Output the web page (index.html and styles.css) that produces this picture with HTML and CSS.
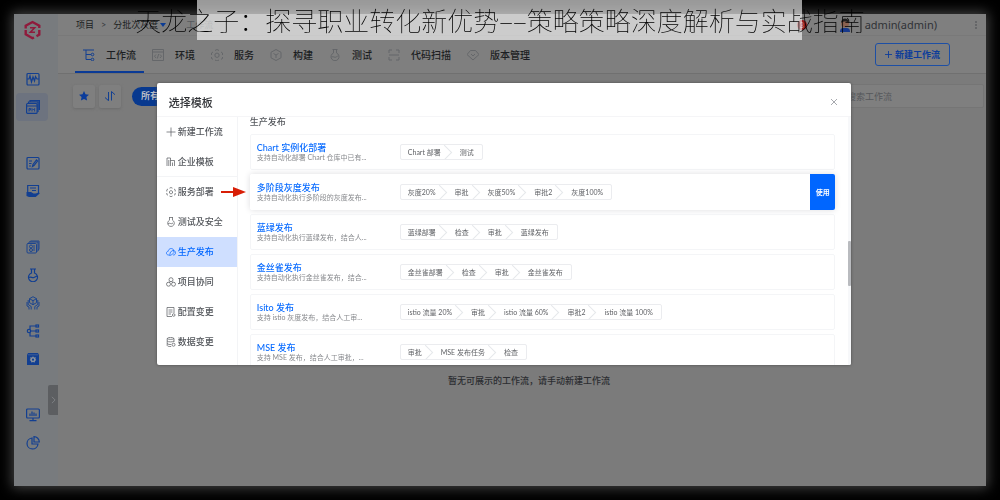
FILE: index.html
```html
<!DOCTYPE html>
<html lang="zh-CN">
<head>
<meta charset="utf-8">
<title>选择模板</title>
<link rel="stylesheet" href="styles.css">
</head>
<body>
<div class="stage">
<div class="app">
  <aside class="sidebar">
    <svg class="logo" viewBox="0 0 18 20"><path d="M2.200 8.500V5.700L9 2l6.800 3.700V8M15.800 10v4.500L13 16.200M10.500 17.500L9 18.200l-6.800-3.900V10" fill="none" stroke="#8f1a3c" stroke-width="2.400"/><path d="M6.500 7.800h4.700L6.800 12.300h4.700" fill="none" stroke="#8f1a3c" stroke-width="1.500"/></svg>
    <nav class="side-group">
      <a class="side-link" href="#"><svg class="icon" viewBox="0 0 14 14"><rect x="1" y="1.500" width="12" height="11.500" rx="1"/><path d="M1 7h2l1-3 1.500 6L7 5l1.500 4 1-4.500L11 7h2"/></svg></a>
      <a class="side-link side-link-active" href="#"><svg class="icon" viewBox="0 0 14 14"><rect x=".6" y="3.500" width="10.500" height="9.900" rx="1"/><path d="M1 6h10M2.500 3.500V2H12v10M4 2V.6h9.400V10"/><path stroke-width=".9" d="M3 11.500v-3h1.600V10H3M6 11.500v-3l1.300 1.300 1.300-1.300v3"/></svg></a>
    </nav>
    <nav class="side-group">
      <a class="side-link" href="#"><svg class="icon" viewBox="0 0 14 14"><rect x="1" y="1.500" width="12" height="11.500" rx="1"/><path d="M3 5h3M3 7.500h2.500M3 10h2M6.500 10.500l.5-2 3.500-4.500 1 1L8 9.500z"/></svg></a>
      <a class="side-link" href="#"><svg class="icon" viewBox="0 0 14 14"><path d="M1.700 9V1.500h10.800V9.500M4 4h6M6 6.500h4"/><path class="fill" d="M.5 8h4.500l2.500 1.500h2L13 8.500l.7 1-4 3.500H3L.5 12z"/></svg></a>
    </nav>
    <nav class="side-group">
      <a class="side-link" href="#"><svg class="icon icon-fine" viewBox="0 0 14 14"><rect x="1" y="3.500" width="9.500" height="9.500" rx="1"/><path d="M2 3.500L3.500 2H12v8.500L10.500 12M3.500 2L4.500 1H13v8l-1 1.500"/><circle cx="5" cy="6.500" r="1.500"/><circle cx="5" cy="10" r="1.500"/><path d="M8 5v6"/></svg></a>
      <a class="side-link" href="#"><svg class="icon" viewBox="0 0 14 14"><path d="M4 1h6M5.500 1v4a4.500 4.500 0 1 0 3 0V1M3 9.500c2-1.500 3 1 5 0l3-1.500"/></svg></a>
      <a class="side-link" href="#"><svg class="icon icon-fine" viewBox="0 0 14 14"><path d="M7 .7l3.500 2v4L7 8.700 3.500 6.700v-4zM3.500 2.700L7 4.700l3.500-2M7 4.700v4M2.200 4v4.500l3 2V13.500M1 6v4l2 1v2.500M11.800 4v4.500l-3 2V13.500M13 6v4l-2 1v2.500"/></svg></a>
      <a class="side-link" href="#"><svg class="icon" viewBox="0 0 14 14"><circle cx="3" cy="7" r="1.700"/><path d="M4.500 7H10M10 2H4v3.500M4 8.500V12h6"/><rect x="10" y="1" width="2.500" height="2"/><rect x="10" y="6" width="2.500" height="2"/><rect x="10" y="11" width="2.500" height="2"/></svg></a>
      <a class="side-link" href="#"><svg class="icon" viewBox="0 0 14 14"><path class="fill" d="M2 1h10l1 2v10H1V3z"/><path class="knock" d="M2 2.800h10"/><path class="gear" d="M7 4.300l1 1.200 1.800-.2-.4 1.600.9 1.100-1.300.9-.3 1.500L7 9.900l-1.700.5-.3-1.500L3.700 8l.9-1.100-.4-1.600 1.800.2z"/><circle class="fill" cx="7" cy="7.700" r="1.100"/></svg></a>
    </nav>
    <nav class="side-group">
      <a class="side-link" href="#"><svg class="icon" viewBox="0 0 14 14"><rect x=".6" y="1" width="12.800" height="9" rx="1"/><path d="M4 8V5.500M6 8V3.500M8 8V4.500M10 8V5.500M7 10v2.500M3.500 12.700h7"/></svg></a>
      <a class="side-link" href="#"><svg class="icon" viewBox="0 0 14 14"><path d="M6 2a5.500 5.500 0 1 0 6 6H6zM8 .700V6h5.300A5.300 5.300 0 0 0 8 .700z"/></svg></a>
    </nav>
    <button class="collapse" aria-label="展开"><svg viewBox="0 0 6 10"><path d="M1 1l4 4-4 4"/></svg></button>
  </aside>
  <main class="main">
    <header class="topbar">
      <a class="crumb" href="#">项目</a><span class="crumb-sep">&gt;</span><a class="crumb" href="#">分批次灰度</a><span class="caret"></span><span class="crumb crumb-faded">工作流</span>
      <div class="user">
        <span class="badge">3</span>
        <svg class="avatar" viewBox="0 0 12 14"><path d="M1 14c0-4 2-4 5-4s5 0 5 4z" fill="#17398c"/><circle cx="6" cy="5.500" r="4" fill="#8b6250"/><path d="M2 5c0-6 8-6 8 0-2-2-6-2-8 0z" fill="#222"/></svg>
        <span class="user-name">admin(admin)</span>
        <button class="more" aria-label="更多"><svg viewBox="0 0 2 8"><circle cx="1" cy="1" r=".8"/><circle cx="1" cy="4" r=".8"/><circle cx="1" cy="7" r=".8"/></svg></button>
      </div>
    </header>
    <div class="tabs">
      <a class="tab tab-active" href="#"><svg viewBox="0 0 12 12"><path d="M0 1h11M3 1v9.500h5M3 5.500h5"/><circle cx="9.500" cy="5.500" r="1.300"/><circle cx="9.500" cy="10.500" r="1.300"/></svg>工作流</a>
      <a class="tab" href="#"><svg viewBox="0 0 12 12"><path d="M.5 .5h11v11H.5zM.5 3h11M4 5.500L2.500 7.200 4 9M8 5.500l1.500 1.700L8 9M6.700 5L5.300 9.500"/></svg>环境</a>
      <a class="tab" href="#"><svg viewBox="0 0 12 12"><path d="M4 1.500L6 .5l2 1M10 3l1.500 1v2M11.500 8v1.500L10 10.300M8 11l-2 1-2-1M2 10.300L.5 9.500V8M.5 6V4L2 3M6 4l2 1v2.500l-2 1-2-1V5z"/></svg>服务</a>
      <a class="tab" href="#"><svg viewBox="0 0 12 12"><path d="M6 .5l5 2.800v5.500l-5 2.700-5-2.700V3.300zM3.500 4.500L6 6l2.500-1.500M6 6v3"/></svg>构建</a>
      <a class="tab" href="#"><svg viewBox="0 0 12 12"><path d="M3.500 .5h5M4.500 .5v3.500a4 4 0 1 0 3 0V.5M2.500 8c2-1 3 1 5 0L9 6.500"/></svg>测试</a>
      <a class="tab" href="#"><svg viewBox="0 0 12 12"><path d="M4 1H1v3M8 1h3v3M1 8v3h3M11 8v3H8M1 6h10"/></svg>代码扫描</a>
      <a class="tab" href="#"><svg viewBox="0 0 12 12"><path d="M3.500 1.500h5L12 5.500 6 11 0 5.500zM4 5l2 2 2-2"/></svg>版本管理</a>
      <button class="create"><svg viewBox="0 0 8 8"><path d="M4 0v8M0 4h8"/></svg>新建工作流</button>
    </div>
    <div class="toolbar">
      <button class="tool" aria-label="收藏"><svg viewBox="0 0 10 10"><path class="star" d="M5 0l1.500 3.300 3.500.4-2.600 2.400.7 3.500L5 7.900 1.900 9.600l.7-3.500L0 3.700l3.500-.4z"/></svg></button>
      <button class="tool" aria-label="排序"><svg viewBox="0 0 10 10"><path d="M0 6.500l3.500 3.200V1M6.500 9.500V.5L10 3.700"/></svg></button>
      <button class="pill">所有</button>
      <input class="search" type="text" placeholder="搜索工作流" aria-label="搜索工作流">
    </div>
    <p class="empty">暂无可展示的工作流，请手动新建工作流</p>
  </main>
</div>
</div>

<div class="overlay">
<section class="modal" role="dialog" aria-labelledby="modal-title">
  <header class="modal-head"><h2 class="modal-title" id="modal-title">选择模板</h2><button class="close" aria-label="关闭"><svg viewBox="0 0 6 6"><path d="M0 0l6 6M6 0L0 6"/></svg></button></header>
  <div class="modal-body">
    <nav class="menu">
      <a class="menu-item" href="#"><svg viewBox="0 0 10 10"><path d="M5 .5v9M.5 5h9"/></svg>新建工作流</a>
      <a class="menu-item menu-item-last" href="#"><svg viewBox="0 0 10 10"><path d="M1 9V1h3.500v8M4.500 3.500h4V9M2.800 3v6M6.500 5.500V9"/></svg>企业模板</a>
      <a class="menu-item" href="#"><svg viewBox="0 0 10 10"><path d="M3.500 1.200L5 .5l1.500.7M8 2l1.200.8v1.700M9.200 6v1.500L8 8.200M6.500 9L5 9.700 3.500 9M2 8.200L.8 7.500V6M.8 4.500V2.800L2 2M5 3.500L6.500 4.400v1.700L5 7l-1.500-.9V4.400z"/></svg>服务部署</a>
      <a class="menu-item" href="#"><svg viewBox="0 0 10 10"><path d="M3 .5h4M3.500 .5v2.700a3.300 3.300 0 1 0 3 0V.5M2 6.800c2-1.500 3 1 5-.8"/></svg>测试及安全</a>
      <a class="menu-item menu-item-active" href="#"><svg viewBox="0 0 10 10"><path d="M3 8H2.200C-.3 7.500 0 4.500 2.200 4.300 2.500 1 7 .5 7.700 3.500 10.300 4 10 8 7.500 8H7M3.500 8.500L4.500 5l3-2 .5 2.500L5.500 8z"/></svg>生产发布</a>
      <a class="menu-item" href="#"><svg viewBox="0 0 10 10"><circle cx="5" cy="2.700" r="2"/><circle cx="2.500" cy="7.200" r="2"/><circle cx="7.500" cy="7.200" r="2"/><path d="M4 4.500L3 5.500M6 4.500l1 1"/></svg>项目协同</a>
      <a class="menu-item" href="#"><svg viewBox="0 0 10 10"><path d="M8 6V.5H1v9h5M2.500 3h4M2.500 5h4M2.500 7h2.500"/><circle cx="7.700" cy="8" r="1.300"/></svg>配置变更</a>
      <a class="menu-item" href="#"><svg viewBox="0 0 10 10"><path d="M8 5V1.500C7 0 2 0 1.200 1.500v7c.5 1 2 1 4 1M1.200 1.500c.8 1.200 6 1.200 6.800 0M1.200 4c.8 1.200 6 1.200 6.800 0M1.200 6.500c.8 1 2.500 1 4 1"/><circle cx="7.500" cy="7.700" r="1.500"/></svg>数据变更</a>
    </nav>
    <div class="templates">
      <h3 class="group-title">生产发布</h3>
      <article class="card"><div class="info"><h4 class="name">Chart 实例化部署</h4><p class="desc">支持自动化部署 Chart 仓库中已有...</p></div><ol class="steps"><li>Chart 部署</li><li>测试</li></ol></article>
      <article class="card card-hover"><div class="info"><h4 class="name">多阶段灰度发布</h4><p class="desc">支持自动化执行多阶段的灰度发布...</p></div><ol class="steps"><li>灰度20%</li><li>审批</li><li>灰度50%</li><li>审批2</li><li>灰度100%</li></ol><button class="use">使用</button>
        <svg class="pointer" viewBox="0 0 25 12"><path d="M0 6h14" stroke="#d81e06" stroke-width="2"/><path d="M12 1l13 5-13 5z" fill="#d81e06" stroke="none"/></svg></article>
      <article class="card"><div class="info"><h4 class="name">蓝绿发布</h4><p class="desc">支持自动化执行蓝绿发布，结合人...</p></div><ol class="steps"><li>蓝绿部署</li><li>检查</li><li>审批</li><li>蓝绿发布</li></ol></article>
      <article class="card"><div class="info"><h4 class="name">金丝雀发布</h4><p class="desc">支持自动化执行金丝雀发布，结合...</p></div><ol class="steps"><li>金丝雀部署</li><li>检查</li><li>审批</li><li>金丝雀发布</li></ol></article>
      <article class="card"><div class="info"><h4 class="name">Isito 发布</h4><p class="desc">支持 istio 灰度发布，结合人工审...</p></div><ol class="steps"><li>istio 流量 20%</li><li>审批</li><li>istio 流量 60%</li><li>审批2</li><li>istio 流量 100%</li></ol></article>
      <article class="card"><div class="info"><h4 class="name">MSE 发布</h4><p class="desc">支持 MSE 发布，结合人工审批，...</p></div><ol class="steps"><li>审批</li><li>MSE 发布任务</li><li>检查</li></ol></article>
    </div>
    <div class="scrollbar"><div class="thumb"></div></div>
  </div>
</section>
</div>

<div class="banner"><div class="banner-plate"></div><h1 class="banner-title">天龙之子：探寻职业转化新优势––策略策略深度解析与实战指南</h1></div>
</body>
</html>
```

FILE: styles.css
```css
* { box-sizing: border-box; }
body { margin: 0; background: #000; font-family: Lato, "Noto Sans CJK SC", sans-serif; font-size: 9px; line-height: 12px; color: #1c1e22; overflow: hidden; }
h1, h2, h3, h4, p, ol { margin: 0; padding: 0; font-weight: 400; }
a { color: inherit; text-decoration: none; }
button, input { font: inherit; color: inherit; border: 0; padding: 0; margin: 0; background: none; }
svg { fill: none; stroke: currentColor; flex: none; display: block; }

.stage { height: 100vh; padding: 14px; }
.app { display: flex; height: 100%; background: #7b7b7b; box-shadow: 0 0 12px 2px #444; }

.sidebar { position: relative; flex: none; width: 44px; background: #787b7e; color: #123f91; }
.logo { width: 19px; height: 20px; margin: 6px 0 25px 9px; stroke: none; }
.side-group { display: flex; flex-direction: column; margin-bottom: 28px; }
.side-link { height: 28px; margin: 0 10px 0 2px; padding-left: 10px; display: flex; align-items: center; border-radius: 4px; }
.side-link-active { background: #6d737f; }
.icon { width: 14px; height: 14px; stroke-width: 1.2; }
.icon-fine { stroke-width: 0.9; }
.icon .fill { fill: currentColor; stroke: none; }
.icon .knock { stroke: #4d6596; stroke-width: 0.8; }
.icon .gear { fill: #8b929c; stroke: none; }
.collapse { position: absolute; right: 0; top: 371px; width: 10px; height: 30px; background: #5c5e61; border-radius: 2px 0 0 2px; color: #85888b; }
.collapse svg { width: 5px; height: 8px; margin-left: 3px; }

.main { flex: 1; min-width: 0; }
.topbar { height: 22px; display: flex; align-items: center; padding: 0 8px 0 18px; background: #7f7f7f; border-bottom: 1px solid #797979; }
.crumb-sep { margin: 0 7px; color: #36383c; }
.caret { margin: 0 20px 0 2px; border: 3px solid transparent; border-top: 4px solid #0c3c94; border-bottom: 0; }
.crumb-faded { color: #55585c; }
.user { margin-left: auto; display: flex; align-items: center; }
.badge { width: 10px; height: 10px; margin-right: 32px; border-radius: 5px; background: #971c1f; color: #c9a0a0; font-size: 7px; line-height: 10px; text-align: center; }
.avatar { width: 12px; height: 14px; margin-right: 14px; stroke: none; }
.user-name { font-family: "Noto Sans", sans-serif; font-size: 11px; color: #303236; }
.more { margin-left: 36px; width: 5px; color: #45484c; }
.more svg { width: 2px; height: 8px; fill: currentColor; stroke: none; margin: auto; }

.tabs { height: 38px; display: flex; align-items: stretch; padding: 0 36px 0 17px; background: #7f7f7f; border-bottom: 1px solid #707070; font-size: 10px; font-weight: 500; }
.tab { display: flex; align-items: center; gap: 11px; padding: 0 8px; }
.tab svg { width: 12px; height: 12px; color: #65676a; }
.tab-active { border-bottom: 2px solid #0a3a96; padding-top: 2px; }
.tab-active svg { color: #123f91; }
.create { align-self: center; margin-left: auto; height: 23px; padding: 0 9px; display: flex; align-items: center; gap: 3px; border: 1px solid #1d4fa5; border-radius: 3px; color: #0b3c9b; font-size: 9px; font-weight: 700; }
.create svg { width: 7px; height: 7px; }

.toolbar { display: flex; align-items: center; height: 44px; padding: 0 2px 0 15px; }
.tool { width: 22px; height: 23px; margin-right: 4px; display: flex; align-items: center; justify-content: center; background: #7f7f7f; border-radius: 2px; box-shadow: 0 1px 3px #6b6b6b; color: #123f91; }
.tool svg { width: 10px; height: 10px; }
.tool .star { fill: #0b3c9b; stroke: none; }
.pill { height: 19px; width: 60px; margin-left: 7px; padding-left: 9px; text-align: left; border-radius: 10px; background: #08398f; color: #b7bcc6; font-size: 9px; font-weight: 700; }
.search { margin-left: auto; width: 150px; height: 24px; padding: 0 12px; border: 1px solid #757575; border-radius: 2px; background: #7f7f7f; }
.search::placeholder { color: #55575b; opacity: 1; }
.empty { margin: 257px 0 0 14px; text-align: center; font-weight: 500; color: #2b2d31; }

.overlay { position: fixed; inset: 0; display: flex; align-items: flex-start; justify-content: center; padding-top: 83px; padding-left: 8px; }
.modal { width: 70%; background: #fff; border-radius: 2px; box-shadow: 0 0 3px #4a4a4a; color: #54575c; overflow: hidden; }
.modal-head { height: 34px; padding: 5px 14px 0 12px; display: flex; align-items: center; justify-content: space-between; border-bottom: 1px solid #f5f5f7; }
.modal-title { font-size: 11px; line-height: 16px; font-weight: 500; color: #303236; padding-top: 2px; }
.close { color: #909399; }
.close svg { width: 6px; height: 6px; overflow: visible; stroke-width: 0.8; }
.modal-body { display: flex; max-height: 248px; overflow: hidden; }
.menu { flex: none; width: 81px; border-right: 1px solid #f3f4f6; }
.menu-item { height: 30px; padding-left: 9px; display: flex; align-items: center; gap: 2px; font-weight: 500; }
.menu-item svg { width: 10px; height: 10px; stroke-width: 0.7; }
.menu-item-last { border-bottom: 1px solid #f3f4f6; }
.menu-item-active { background: #cfdfff; color: #0066ff; }
.templates { flex: 1; min-width: 0; padding: 0 13px 0 12px; display: flex; flex-direction: column; gap: 4px; }
.group-title { flex: none; font-size: 9px; line-height: 10px; height: 13px; font-weight: 500; }
.card { position: relative; flex: none; height: 36px; padding-left: 6px; display: flex; align-items: center; border: 1px solid #f4f5f7; border-radius: 2px; }
.card-hover { border-color: #fff; box-shadow: 0 0 6px #dcdcdf; }
.info { width: 143px; }
.name { font-size: 9px; line-height: 10px; font-weight: 500; color: #0a6cff; }
.desc { font-size: 7px; line-height: 8px; color: #888a8e; white-space: nowrap; }
.steps { display: flex; height: 16px; list-style: none; border: 1px solid #ebecef; border-radius: 2px; font-size: 7px; line-height: 14px; color: #606266; overflow: hidden; }
.steps li { position: relative; padding: 0 12px 0 7px; white-space: nowrap; }
.steps li:last-child { padding-right: 8px; }
.steps li:not(:last-child)::after { content: ""; position: absolute; right: 3px; top: 2px; width: 10px; height: 10px; border: 1px solid #e6e8eb; border-left: 0; border-bottom: 0; transform: rotate(45deg); }
.use { align-self: stretch; margin: -1px -1px -1px auto; width: 25px; background: #0066ff; color: #fff; font-size: 7px; font-weight: 700; border-radius: 0 2px 2px 0; }
.pointer { position: absolute; left: -30px; top: 11px; width: 25px; height: 12px; }
.scrollbar { width: 3px; background: #f7f8fa; }
.thumb { height: 45px; margin-top: 124px; background: #b9bbbf; border-radius: 1px; }

.banner { position: fixed; inset: 0 0 auto; height: 40px; display: flex; justify-content: center; align-items: center; }
.banner-plate { position: absolute; top: 0; bottom: 0; left: 197px; right: 198px; background: rgba(255, 255, 255, 0.6); }
.banner-title { position: relative; font-family: "Noto Sans CJK SC", sans-serif; font-size: 26px; line-height: 40px; font-weight: 100; color: #000; white-space: nowrap; }
```
